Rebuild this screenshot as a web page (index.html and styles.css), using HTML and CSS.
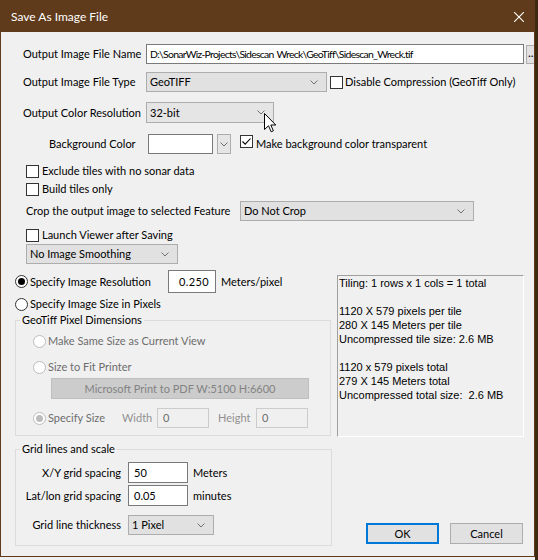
FILE: index.html
```html
<!DOCTYPE html>
<html>
<head>
<meta charset="utf-8">
<title>Save As Image File</title>
<link rel="stylesheet" href="styles.css">
</head>
<body>
<div class="window">
  <div class="titlebar">
    <span class="title">Save As Image File</span>
    <svg class="close" width="10" height="10" viewBox="0 0 10 10"><path d="M0 0 L10 10 M10 0 L0 10" stroke="#fff" stroke-width="1.1" fill="none"/></svg>
  </div>

  <div class="row r1">
    <span class="lbl-main">Output Image File Name</span>
    <div class="field path">D:\SonarWiz-Projects\Sidescan Wreck\GeoTiff\Sidescan_Wreck.tif</div>
    <div class="browse">...</div>
  </div>

  <div class="row r2">
    <span class="lbl-main">Output Image File Type</span>
    <div class="combo type"><span>GeoTIFF</span><svg class="chev" width="8" height="5" viewBox="0 0 8 5"><polyline points="0.5,0.5 4,4 7.5,0.5" fill="none" stroke="#707070"/></svg></div>
    <span class="chk compress"></span>
    <span class="chk-lbl">Disable Compression (GeoTiff Only)</span>
  </div>

  <div class="row r3">
    <span class="lbl-main">Output Color Resolution</span>
    <div class="combo color-res"><span>32-bit</span><svg class="chev" width="8" height="5" viewBox="0 0 8 5"><polyline points="0.5,0.5 4,4 7.5,0.5" fill="none" stroke="#707070"/></svg></div>
  </div>

  <div class="row r4">
    <span class="lbl-bg">Background Color</span>
    <div class="colorbox"></div>
    <div class="colorbtn"><svg class="chev" width="8" height="5" viewBox="0 0 8 5"><polyline points="0.5,0.5 4,4 7.5,0.5" fill="none" stroke="#707070"/></svg></div>
    <span class="chk checked transp"><svg width="11" height="11" viewBox="0 0 11 11"><path d="M1.5 5.5 L4.2 8.2 L9.5 2.5" fill="none" stroke="#000" stroke-width="1.1"/></svg></span>
    <span class="chk-lbl transp-lbl">Make background color transparent</span>
  </div>

  <div class="row chk-row exclude">
    <span class="chk"></span><span class="chk-lbl">Exclude tiles with no sonar data</span>
  </div>
  <div class="row chk-row">
    <span class="chk"></span><span class="chk-lbl">Build tiles only</span>
  </div>

  <div class="row crop">
    <span class="crop-lbl">Crop the output image to selected Feature</span>
    <div class="combo crop-sel"><span>Do Not Crop</span><svg class="chev" width="8" height="5" viewBox="0 0 8 5"><polyline points="0.5,0.5 4,4 7.5,0.5" fill="none" stroke="#707070"/></svg></div>
  </div>

  <div class="row chk-row launch">
    <span class="chk"></span><span class="chk-lbl">Launch Viewer after Saving</span>
  </div>

  <div class="row smooth">
    <div class="combo smooth-sel"><span>No Image Smoothing</span><svg class="chev" width="8" height="5" viewBox="0 0 8 5"><polyline points="0.5,0.5 4,4 7.5,0.5" fill="none" stroke="#707070"/></svg></div>
  </div>

  <div class="split">
    <div class="leftcol">
      <div class="row res">
        <span class="radio on"></span>
        <span class="res-lbl">Specify Image Resolution</span>
        <div class="field res-val">0.250</div>
        <span class="unit">Meters/pixel</span>
      </div>
      <div class="row size">
        <span class="radio"></span>
        <span class="radio-lbl">Specify Image Size in Pixels</span>
      </div>

      <fieldset class="group g1">
        <legend>GeoTiff Pixel Dimensions</legend>
        <div class="row g1r1 disabled">
          <span class="radio off"></span><span class="radio-lbl">Make Same Size as Current View</span>
        </div>
        <div class="row g1r2 disabled">
          <span class="radio off"></span><span class="radio-lbl">Size to Fit Printer</span>
        </div>
        <div class="printer-btn">Microsoft Print to PDF W:5100 H:6600</div>
        <div class="row g1r3 disabled">
          <span class="radio off on"></span><span class="radio-lbl spec-lbl">Specify Size</span>
          <span class="dim-lbl w-lbl">Width</span>
          <div class="field dis-field">0</div>
          <span class="dim-lbl h-lbl">Height</span>
          <div class="field dis-field">0</div>
        </div>
      </fieldset>
    </div>

    <div class="info">Tiling: 1 rows x 1 cols = 1 total

1120 X 579 pixels per tile
280 X 145 Meters per tile
Uncompressed tile size: 2.6 MB

1120 x 579 pixels total
279 X 145 Meters total
Uncompressed total size:  2.6 MB</div>
  </div>

  <div class="bottom">
    <fieldset class="group g2">
      <legend>Grid lines and scale</legend>
      <div class="row g2r1">
        <span class="grid-lbl">X/Y grid spacing</span>
        <div class="field grid-val">50</div>
        <span class="grid-unit">Meters</span>
      </div>
      <div class="row g2r2">
        <span class="grid-lbl">Lat/lon grid spacing</span>
        <div class="field grid-val">0.05</div>
        <span class="grid-unit">minutes</span>
      </div>
      <div class="row g2r3">
        <span class="grid-lbl">Grid line thickness</span>
        <div class="combo thick-sel"><span>1 Pixel</span><svg class="chev" width="8" height="5" viewBox="0 0 8 5"><polyline points="0.5,0.5 4,4 7.5,0.5" fill="none" stroke="#707070"/></svg></div>
      </div>
    </fieldset>
    <div class="buttons">
      <div class="btn ok">OK</div>
      <div class="btn cancel">Cancel</div>
    </div>
  </div>

  <svg class="cursor" width="13" height="20" viewBox="0 0 13 20"><path d="M0.5 0.5 L0.5 16.5 L4.5 12.8 L7.2 18.8 L9.4 17.8 L6.8 12 L11.8 12 Z" fill="#fff" stroke="#000" stroke-width="1" stroke-linejoin="miter"/></svg>
</div>
</body>
</html>
```

FILE: styles.css
```css
* { box-sizing: border-box; }
html, body { margin: 0; padding: 0; }
body {
  width: 538px;
  height: 560px;
  overflow: hidden;
  background: linear-gradient(to right, #f0f0f0 535px, #3d2810 535px);
  font-family: Lato, "Liberation Sans", sans-serif;
  font-size: 11px;
  line-height: 16px;
  color: #000;
}
.window {
  position: relative;
  width: 535px;
  height: 557px;
  background: #f0f0f0;
  border: 1px solid #603b1b;
  border-top: 0;
  overflow: hidden;
}
.titlebar {
  height: 32px;
  margin: 0 -1px;
  background: #603b1b;
  color: #fff;
  display: flex;
  align-items: center;
  justify-content: space-between;
  padding: 1px 11px 0 11px;
  font-size: 12px;
}
.close { display: block; }

.row { display: flex; align-items: center; white-space: nowrap; }

.r1 { margin-top: 12px; height: 20px; padding-left: 22px; }
.r2 { margin-top: 8px; height: 20px; padding-left: 22px; }
.r3 { margin-top: 10px; height: 21px; padding-left: 22px; }
.r4 { margin-top: 11px; height: 20px; }
.lbl-main { width: 123px; flex: none; }

.field {
  height: 20px;
  background: #fff;
  border: 1px solid #7a7a7a;
  display: flex;
  align-items: center;
  padding-left: 3px;
  overflow: hidden;
  flex: none;
}
.path { width: 378px; font-size: 10.4px; letter-spacing: -0.7px; word-spacing: 1px; }
.browse {
  flex: none;
  width: 14px;
  height: 19px;
  margin-left: 2px;
  background: #e1e1e1;
  border: 1px solid #adadad;
  font-size: 12px;
  line-height: 14px;
  padding-left: 1px;
  overflow: hidden;
}

.combo {
  flex: none;
  height: 20px;
  background: #e1e1e1;
  border: 1px solid #adadad;
  display: flex;
  align-items: center;
  justify-content: space-between;
  padding: 0 8px 0 3px;
}
.chev { display: block; flex: none; }
.type { width: 181px; }
.color-res { width: 128px; height: 21px; background: #e5e5e5; }

.chk {
  flex: none;
  width: 13px;
  height: 13px;
  background: #fff;
  border: 1px solid #333;
  display: flex;
  align-items: center;
  justify-content: center;
}
.chk svg { display: block; }
.compress { margin-left: 3px; }
.chk-lbl { margin-left: 2px; }

.lbl-bg { margin-left: 48px; width: 99px; flex: none; }
.colorbox { flex: none; width: 65px; height: 20px; background: #fff; border: 1px solid #7a7a7a; }
.colorbtn {
  flex: none;
  width: 14px;
  height: 20px;
  margin-left: 4px;
  background: #e5e5e5;
  border: 1px solid #adadad;
  display: flex;
  align-items: center;
  justify-content: center;
}
.transp { margin-left: 9px; margin-top: -6px; }
.transp-lbl { margin-left: 3px; }

.chk-row { height: 18px; padding-left: 25px; }
.chk-row .chk-lbl { margin-left: 3px; }
.exclude { margin-top: 8px; }
.crop { margin-top: 3px; height: 20px; padding-left: 25px; }
.crop-lbl { width: 214px; flex: none; }
.crop-sel { width: 234px; }
.launch { margin-top: 5px; }
.smooth { height: 20px; padding-left: 25px; }
.smooth-sel { width: 152px; }

.split { display: flex; align-items: flex-start; }
.leftcol { width: 336px; flex: none; }

.radio {
  flex: none;
  width: 13px;
  height: 13px;
  border-radius: 50%;
  border: 1px solid #333;
  background: #fff;
  display: flex;
  align-items: center;
  justify-content: center;
}
.radio.on::after {
  content: "";
  width: 7px;
  height: 7px;
  border-radius: 50%;
  background: #000;
}
.radio.off { border-color: #bcbcbc; background: #fff; }
.radio.off.on::after { background: #bcbcbc; }
.radio-lbl { margin-left: 2px; }

.res { margin-top: 6px; height: 23px; padding-left: 14px; }
.res-lbl { margin-left: 2px; width: 138px; flex: none; }
.res-val { width: 48px; height: 23px; justify-content: flex-end; padding-right: 6px; letter-spacing: 0.4px; }
.unit { margin-left: 5px; }
.size { margin-top: 3px; height: 16px; padding-left: 14px; }

.group {
  margin: 0 0 0 14px;
  padding: 0;
  border: 1px solid #dcdcdc;
  min-width: 0;
}
.group legend {
  margin-left: 4px;
  padding: 0 2px;
  line-height: 16px;
  font-size: 11px;
}
.g1 { width: 316px; padding-bottom: 7px; }
.disabled { color: #6d6d6d; }
.g1r1 { margin-top: 5px; height: 16px; padding-left: 17px; }
.g1r2 { margin-top: 10px; height: 16px; padding-left: 17px; }
.printer-btn {
  margin: 3px 0 0 35px;
  width: 258px;
  height: 21px;
  background: #cccccc;
  border: 1px solid #bfbfbf;
  color: #838383;
  text-align: center;
  line-height: 19px;
}
.g1r3 { margin-top: 9px; height: 20px; padding-left: 17px; }
.spec-lbl { width: 74px; flex: none; }
.dim-lbl { color: #909090; flex: none; }
.w-lbl { width: 35px; }
.h-lbl { margin-left: 9px; width: 38px; }
.dis-field { width: 52px; height: 20px; background: #f0f0f0; border-color: #cccccc; color: #6d6d6d; padding-left: 5px; }

.info {
  flex: none;
  margin-top: 11px;
  width: 187px;
  height: 162px;
  border: 1px solid;
  border-color: #a0a0a0 #ffffff #ffffff #a0a0a0;
  padding: 0 0 0 1px;
  font-family: "Liberation Sans", Arial, sans-serif;
  font-size: 11px;
  line-height: 14px;
  white-space: pre;
  color: #000;
}

.bottom { display: flex; align-items: flex-end; margin-top: 4px; }
.g2 { width: 317px; padding-bottom: 10px; }
.g2r1 { margin-top: 5px; height: 21px; }
.g2r2 { margin-top: 2px; height: 21px; }
.g2r3 { margin-top: 9px; height: 20px; }
.grid-lbl { width: 105px; flex: none; text-align: right; }
.grid-val { margin-left: 7px; width: 60px; height: 21px; padding-left: 5px; }
.grid-unit { margin-left: 5px; }
.thick-sel { margin-left: 7px; width: 86px; }

.buttons { display: flex; margin-bottom: 2px; }
.btn {
  width: 73px;
  height: 21px;
  background: #e1e1e1;
  border: 1px solid #adadad;
  text-align: center;
  line-height: 19px;
}
.ok { margin-left: 34px; border: 2px solid #0078d7; line-height: 17px; }
.cancel { margin-left: 11px; }

.cursor { position: absolute; left: 263px; top: 113px; display: block; }
```
